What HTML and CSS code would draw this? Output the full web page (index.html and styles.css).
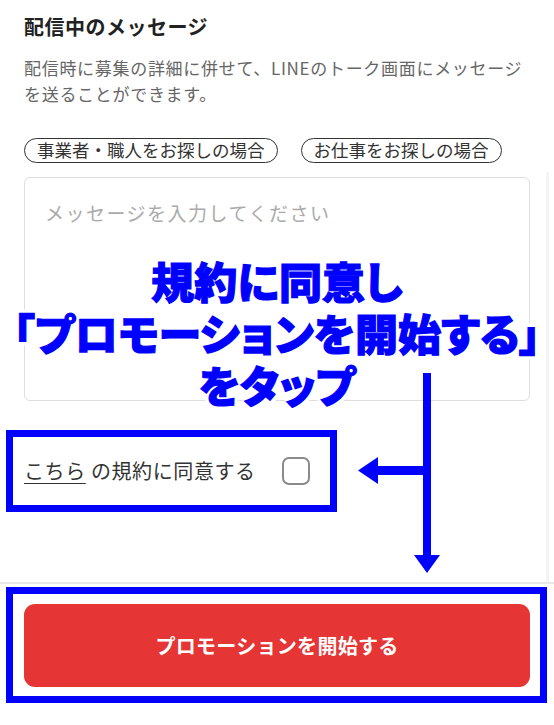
FILE: index.html
```html
<!DOCTYPE html>
<html lang="ja">
<head>
<meta charset="utf-8">
<title>配信中のメッセージ</title>
<link rel="stylesheet" href="styles.css">
</head>
<body>
<div class="page">
  <main class="content">
    <h2 class="title">配信中のメッセージ</h2>
    <p class="desc">配信時に募集の詳細に併せて、LINEのトーク画面にメッセージ<br>を送ることができます。</p>
    <div class="tags">
      <span class="tag">事業者・職人をお探しの場合</span>
      <span class="tag">お仕事をお探しの場合</span>
    </div>
    <div class="textarea"><span class="placeholder">メッセージを入力してください</span></div>
    <label class="agree">
      <span class="agree-text"><a class="link">こちら</a> の規約に同意する</span>
      <span class="checkbox"></span>
    </label>
    <div class="scroll-edge"></div>
  </main>
  <footer class="footer">
    <button class="start" type="button">プロモーションを開始する</button>
  </footer>

  <!-- guide overlay -->
  <p class="callout"><span class="callout-line">規約に同意し</span><span class="callout-line">「プロモーションを開始する」</span><span class="callout-line">をタップ</span></p>
  <div class="mark mark-agree"></div>
  <div class="mark mark-button"></div>
  <svg class="arrows" viewBox="0 0 554 725" width="554" height="725" aria-hidden="true">
    <rect x="423" y="373" width="8" height="184" fill="#0000ff"/>
    <polygon points="414,555 440,555 427,573" fill="#0000ff"/>
    <rect x="376" y="466" width="51" height="9" fill="#0000ff"/>
    <polygon points="378,457 378,484 358,470.5" fill="#0000ff"/>
  </svg>
</div>
</body>
</html>
```
FILE: styles.css
```css
* { box-sizing: border-box; }

html, body {
  margin: 0;
  padding: 0;
  background: #fff;
}

body {
  font-family: "Noto Sans CJK JP", "Noto Sans", sans-serif;
  color: #333;
}

.page {
  position: relative;
  width: 554px;
  height: 725px;
  overflow: hidden;
}

/* ---- scrolling form area ---- */
.content {
  position: relative;
  height: 582px;
  padding: 13px 24px 0;
  display: flex;
  flex-direction: column;
}

.title {
  margin: 0;
  font-size: 20px;
  letter-spacing: 0.5px;
  line-height: 28px;
  font-weight: 700;
  color: #222;
}

.desc {
  margin: 14px 0 0;
  font-size: 17px;
  letter-spacing: 0.7px;
  line-height: 25.5px;
  color: #666;
  white-space: nowrap;
}

.tags {
  margin-top: 32px;
  display: flex;
  gap: 23px;
}

.tag {
  display: inline-block;
  height: 25px;
  padding: 0 12px;
  border: 1.5px solid #333;
  border-radius: 999px;
  font-size: 17.5px;
  line-height: 21px;
  color: #333;
  white-space: nowrap;
}

.textarea {
  margin-top: 14px;
  height: 224px;
  width: 506px;
  border: 1.5px solid #dedede;
  border-radius: 6px;
  padding: 20px 20px;
}

.placeholder {
  display: block;
  font-size: 19px;
  letter-spacing: 1.5px;
  line-height: 30px;
  color: #aaa;
}

.agree {
  margin-top: 56px;
  height: 28px;
  display: flex;
  align-items: center;
  gap: 26px;
}

.agree-text {
  font-size: 20px;
  letter-spacing: 0.6px;
  line-height: 28px;
  color: #333;
}

.link {
  color: #333;
  text-decoration: underline;
  text-underline-offset: 4px;
  text-decoration-thickness: 1px;
}

.checkbox {
  width: 28px;
  height: 28px;
  border: 2px solid #8a8a8a;
  border-radius: 7px;
  background: #fff;
}

/* thin track on the right edge of the scroll area */
.scroll-edge {
  position: absolute;
  right: 5px;
  top: 172px;
  bottom: 0;
  width: 3px;
  background: #f4f4f4;
}

/* ---- fixed footer ---- */
.footer {
  border-top: 2px solid #e8e8e8;
  padding: 20px 24px 38px;
}

.start {
  display: block;
  width: 506px;
  height: 83px;
  border: 0;
  border-radius: 11px;
  background: #e53535;
  color: #fff;
  font-family: "Noto Sans CJK JP", "Noto Sans", sans-serif;
  font-size: 20px;
  font-weight: 700;
  letter-spacing: 0.3px;
}

/* ---- guide overlay ---- */
.callout {
  position: absolute;
  left: 0;
  top: 254px;
  width: 554px;
  margin: 0;
  display: flex;
  flex-direction: column;
  align-items: center;
  font-size: 43px;
  font-weight: 900;
  color: #0000ff;
  font-feature-settings: "palt";
  -webkit-text-stroke: 1.2px #0000ff;
  text-shadow:
    3px 0 0 #fff, -3px 0 0 #fff, 0 3px 0 #fff, 0 -3px 0 #fff,
    2px 2px 0 #fff, -2px 2px 0 #fff, 2px -2px 0 #fff, -2px -2px 0 #fff,
    4px 0 0 #fff, -4px 0 0 #fff, 0 4px 0 #fff, 0 -4px 0 #fff,
    3px 3px 0 #fff, -3px 3px 0 #fff, 3px -3px 0 #fff, -3px -3px 0 #fff;
}

.callout-line {
  display: block;
  height: 52px;
  line-height: 52px;
  white-space: nowrap;
}

.mark {
  position: absolute;
  border: 7px solid #0000ff;
}

.mark-agree {
  left: 6px;
  top: 430px;
  width: 331px;
  height: 82px;
}

.mark-button {
  left: 6px;
  top: 587px;
  width: 541px;
  height: 116px;
}

.arrows {
  position: absolute;
  left: 0;
  top: 0;
  pointer-events: none;
}
```
